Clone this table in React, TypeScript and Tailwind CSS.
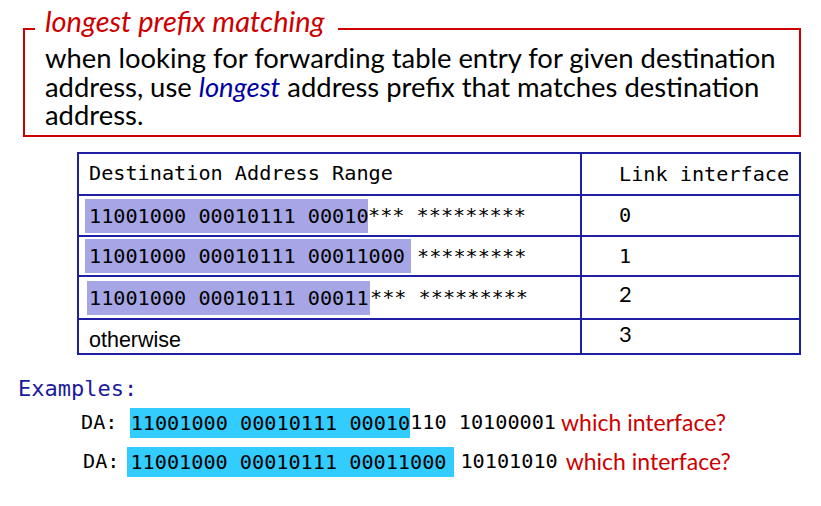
import React from 'react';

const mono = "font-['DejaVu_Sans_Mono',monospace]";
const sans = "font-['Lato','Noto_Sans',sans-serif]";

const HL = ({ children, className = '' }: { children: React.ReactNode; className?: string }) => (
  <span className={`inline-block bg-[#a6a6e6] h-[34px] leading-[34px] whitespace-pre overflow-hidden ${className}`}>{children}</span>
);

export default function App() {
  return (
    <div className="w-[821px] h-[506px] bg-white overflow-hidden text-black">
      {/* red framed definition */}
      <div className="relative ml-[23px] mt-[28px] w-[778px] h-[109px] border-2 border-[#cc0000] pt-[14px] pl-[20px]">
        <span className={`absolute left-[10px] top-[-26px] bg-white pl-[10px] pr-[13px] text-[29px] leading-[34px] italic text-[#cc0000] ${sans}`}>
          longest prefix matching
        </span>
        <p className={`text-[27.4px] leading-[28.5px] whitespace-nowrap ${sans}`}>
          when looking for forwarding table entry for given destination
          <br />
          address, use <i className="text-[#0000a0]">longest</i> address prefix that matches destination
          <br />
          address.
        </p>
      </div>

      {/* forwarding table */}
      <div className={`ml-[77px] mt-[15px] w-[724px] border-2 border-[#1f1fa3] text-[20.2px] ${mono}`}>
        <div className="flex h-[40px]">
          <div className="w-[501px] flex items-center pl-[10px] pb-[2px] whitespace-pre">Destination Address Range</div>
          <div className="flex-1 border-l-2 border-[#1f1fa3] flex items-center pl-[37px]">Link interface</div>
        </div>
        <div className="flex h-[41px] border-t-2 border-[#1f1fa3]">
          <div className="w-[501px] flex items-center pl-[6px] whitespace-pre">
            <HL className="pl-[4px] w-[283px]">11001000 00010111 00010</HL>*** *********
          </div>
          <div className="flex-1 border-l-2 border-[#1f1fa3] flex items-center pl-[37px]">0</div>
        </div>
        <div className="flex h-[40px] border-t-2 border-[#1f1fa3]">
          <div className="w-[501px] flex items-center pl-[6px] whitespace-pre">
            <HL className="pl-[4px] w-[326px]">11001000 00010111 00011000</HL>
            <span className="ml-[6px]">*********</span>
          </div>
          <div className="flex-1 border-l-2 border-[#1f1fa3] flex items-center pl-[37px]">1</div>
        </div>
        <div className="flex h-[43px] border-t-2 border-[#1f1fa3]">
          <div className="w-[501px] flex items-center pl-[8px] whitespace-pre">
            <HL className="pl-[2px] w-[283px]">11001000 00010111 00011</HL>*** *********
          </div>
          <div className={`flex-1 border-l-2 border-[#1f1fa3] pl-[37px] pt-[2px] text-[22px] leading-[30px] ${sans}`}>2</div>
        </div>
        <div className="flex h-[35px] border-t-2 border-[#1f1fa3]">
          <div className="w-[501px] pl-[10px] pt-[6px] text-[21.5px] leading-[28px] font-['Liberation_Sans',Arial,sans-serif]">otherwise</div>
          <div className={`flex-1 border-l-2 border-[#1f1fa3] pl-[37px] text-[22px] leading-[28px] ${sans}`}>3</div>
        </div>
      </div>

      {/* examples */}
      <div className={`ml-[18px] mt-[20px] text-[22px] leading-[28px] text-[#1a1a9a] ${mono}`}>Examples:</div>
      <div className={`text-[20.2px] ${mono}`}>
        <div className="flex items-center h-[39px] pl-[81px] whitespace-pre">
          <span>DA: </span>
          <span className="inline-block bg-[#33ccff] h-[30px] leading-[30px] pl-[1px]">11001000 00010111 00010</span>
          <span>110 10100001</span>
          <span className={`ml-[5px] text-[23px] text-[#cc0000] ${sans}`}>which interface?</span>
        </div>
        <div className="flex items-center h-[39px] pl-[83px] whitespace-pre">
          <span>DA:</span>
          <span className="inline-block bg-[#33ccff] h-[30px] leading-[30px] ml-[8px] w-[327px] overflow-hidden pl-[3px]">11001000 00010111 00011000</span>
          <span className="ml-[6px]">10101010</span>
          <span className={`ml-[8px] text-[23px] text-[#cc0000] ${sans}`}>which interface?</span>
        </div>
      </div>
    </div>
  );
}
